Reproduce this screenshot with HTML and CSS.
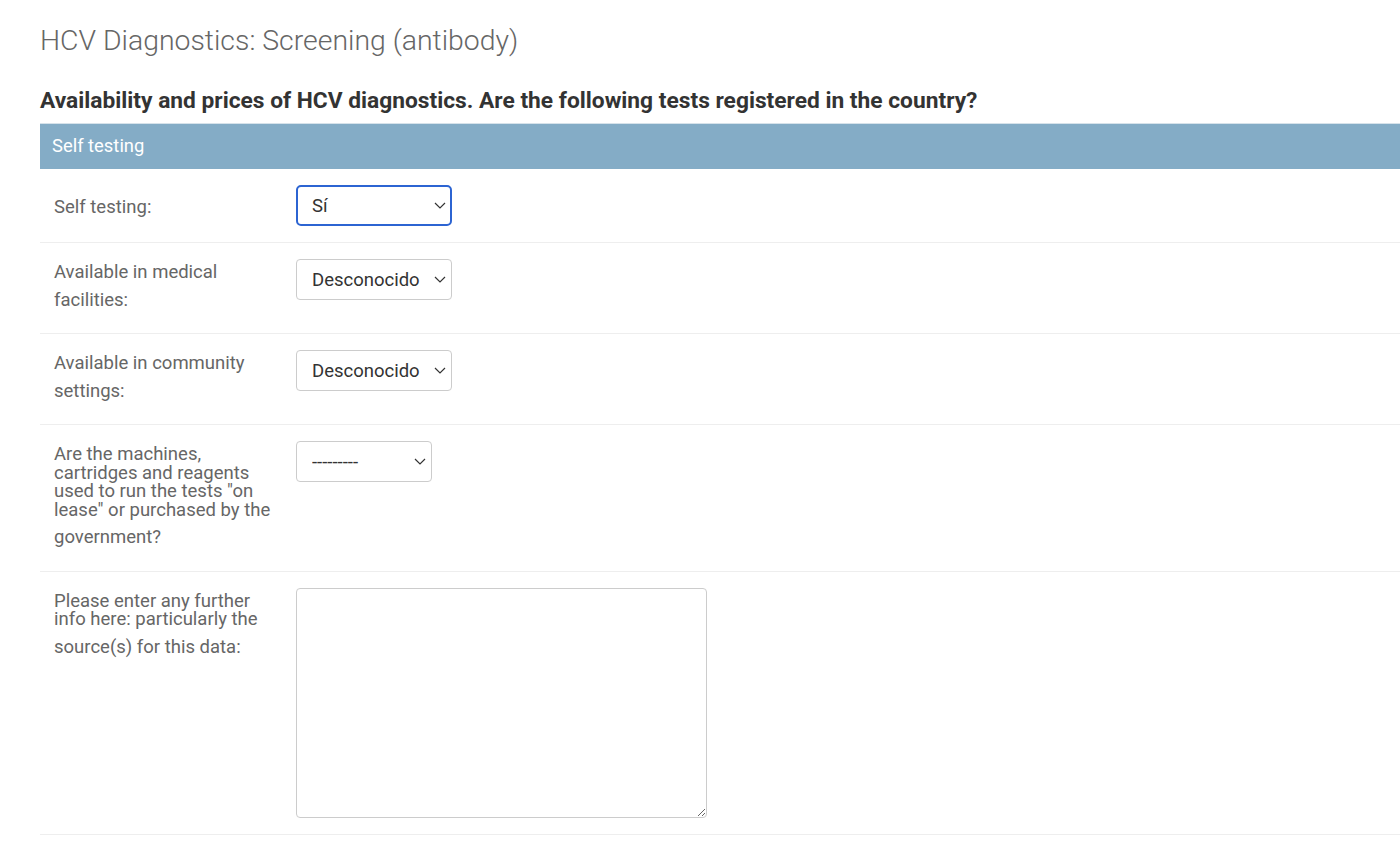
FILE: index.html
```html
<!DOCTYPE html>
<html lang="en">
<head>
  <meta charset="UTF-8">
  <title>HCV Diagnostics: Screening (antibody)</title>
  <link rel="stylesheet" href="styles.css">
</head>
<body>
  <div class="content">
    <h1>HCV Diagnostics: Screening (antibody)</h1>
    <h2 class="question">Availability and prices of HCV diagnostics. Are the following tests registered in the country?</h2>

    <fieldset class="module">
      <h3 class="caption">Self testing</h3>

      <div class="form-row">
        <label for="id_self_testing">Self testing:</label>
        <div class="select-wrap wide">
          <select id="id_self_testing" class="focused">
            <option selected>Sí</option>
            <option>No</option>
            <option>Desconocido</option>
          </select>
          <svg class="chevron" viewBox="0 0 12 7"><path d="M1 1l5 5 5-5"/></svg>
        </div>
      </div>

      <div class="form-row">
        <label for="id_medical">Available in medical facilities:</label>
        <div class="select-wrap wide">
          <select id="id_medical">
            <option>Sí</option>
            <option>No</option>
            <option selected>Desconocido</option>
          </select>
          <svg class="chevron" viewBox="0 0 12 7"><path d="M1 1l5 5 5-5"/></svg>
        </div>
      </div>

      <div class="form-row">
        <label for="id_community">Available in community settings:</label>
        <div class="select-wrap wide">
          <select id="id_community">
            <option>Sí</option>
            <option>No</option>
            <option selected>Desconocido</option>
          </select>
          <svg class="chevron" viewBox="0 0 12 7"><path d="M1 1l5 5 5-5"/></svg>
        </div>
      </div>

      <div class="form-row">
        <label for="id_lease">Are the machines, cartridges and reagents used to run the tests "on lease" or purchased by the government?</label>
        <div class="select-wrap narrow">
          <select id="id_lease">
            <option selected>---------</option>
            <option>On lease</option>
            <option>Purchased</option>
          </select>
          <svg class="chevron" viewBox="0 0 12 7"><path d="M1 1l5 5 5-5"/></svg>
        </div>
      </div>

      <div class="form-row">
        <label for="id_info">Please enter any further info here: particularly the source(s) for this data:</label>
        <textarea id="id_info"></textarea>
      </div>
    </fieldset>
  </div>
</body>
</html>
```

FILE: styles.css
```css
html, body {
  overflow-x: hidden;
}
body {
  margin: 0;
  font-family: Roboto, "Liberation Sans", sans-serif;
  color: #333;
  background: #fff;
}
.content {
  padding: 24px 0 0 40px;
}
h1 {
  margin: 0;
  font-size: 28.4px;
  font-weight: 300;
  line-height: 34px;
  color: #666;
}
.question {
  margin: 29px 0 8px;
  font-size: 22.75px;
  font-weight: 700;
  line-height: 28px;
  color: #333;
}
.module {
  margin: 0;
  padding: 0;
  border: none;
}
.caption {
  margin: 0;
  padding: 0 12px;
  height: 45px;
  line-height: 44px;
  font-size: 18.4px;
  font-weight: 400;
  color: #fff;
  background: #84acc6;
  border-top: 1px solid #d6e2ea;
}
.form-row {
  display: flex;
  align-items: flex-start;
  padding: 16px 0 16px 14px;
  border-bottom: 1px solid #eee;
}
.form-row label {
  flex: 0 0 228px;
  padding: 4px 14px 8px 0;
  font-size: 18.5px;
  line-height: 18.5px;
  color: #666;
}
.form-row label::after {
  content: "";
  display: inline-block;
  width: 0;
  height: 24px;
}
.select-wrap {
  position: relative;
  height: 41px;
}
.select-wrap.wide {
  width: 156px;
}
.select-wrap.narrow {
  width: 136px;
}
select {
  -webkit-appearance: none;
  appearance: none;
  box-sizing: border-box;
  width: 100%;
  height: 41px;
  margin: 0;
  padding: 0 30px 0 15px;
  font-family: Roboto, "Liberation Sans", sans-serif;
  font-size: 18.5px;
  color: #333;
  background: #fff;
  border: 1px solid #ccc;
  border-radius: 4px;
  outline: none;
}
select.focused {
  padding-left: 14px;
  border: 2px solid #2c64d2;
  border-radius: 5px;
}
.chevron {
  position: absolute;
  right: 6px;
  top: 17px;
  width: 12px;
  height: 7px;
  fill: none;
  stroke: #333;
  stroke-width: 1.2;
  pointer-events: none;
}
textarea {
  box-sizing: border-box;
  width: 411px;
  height: 230px;
  margin: 0;
  padding: 6px 8px;
  font-family: Roboto, "Liberation Sans", sans-serif;
  font-size: 18px;
  color: #333;
  border: 1px solid #ccc;
  border-radius: 4px;
}
```
